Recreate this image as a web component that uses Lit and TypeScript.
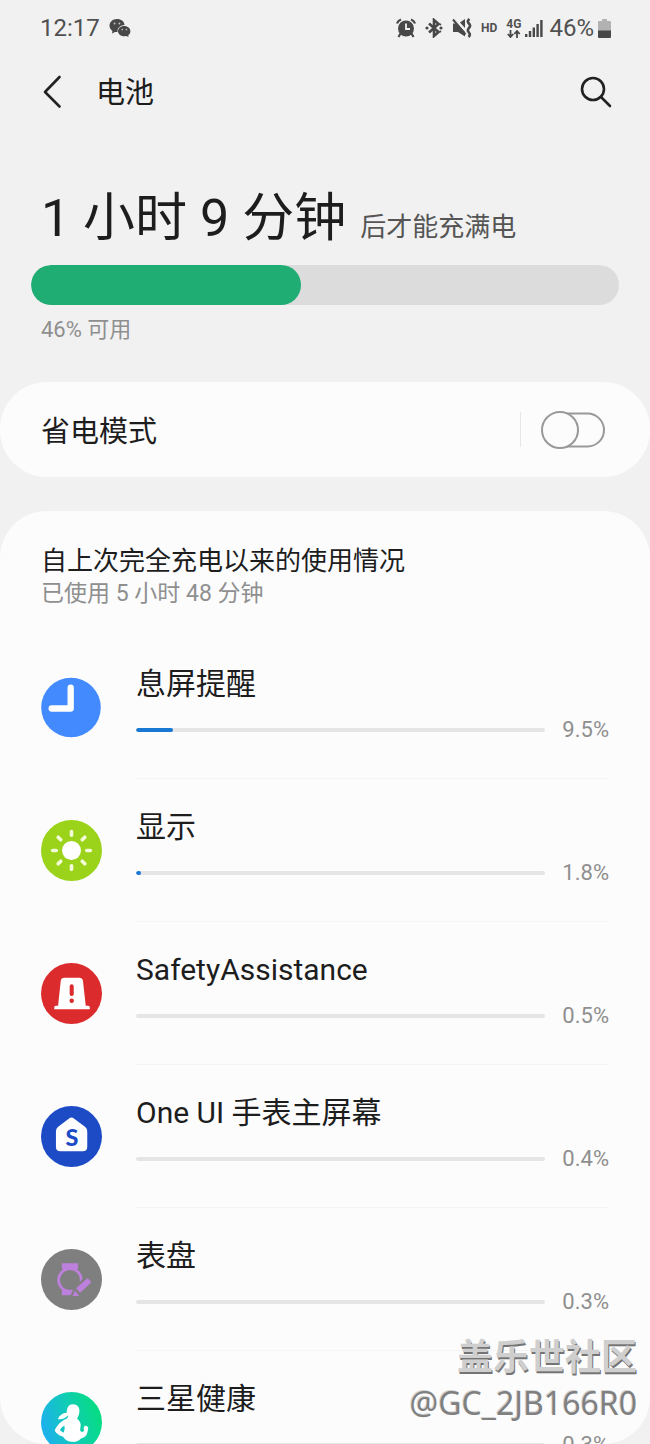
import { LitElement, html, css, svg } from "lit";
import { customElement, property, state } from "lit/decorators.js";

type Usage = { name: string; percent: number; icon: string };

const USAGE: Usage[] = [
  { name: "息屏提醒", percent: 9.5, icon: "clock" },
  { name: "显示", percent: 1.8, icon: "display" },
  { name: "SafetyAssistance", percent: 0.5, icon: "safety" },
  { name: "One UI 手表主屏幕", percent: 0.4, icon: "home" },
  { name: "表盘", percent: 0.3, icon: "watch" },
  { name: "三星健康", percent: 0.3, icon: "health" },
];

const rays = [0, 45, 90, 135, 180, 225, 270, 315];

const ICONS: Record<string, unknown> = {
  clock: svg`
    <circle cx="29.5" cy="30" r="29.3" fill="#448aff"/>
    <path d="M29.2 10.5V31H10.500" fill="none" stroke="#fff" stroke-width="6.2" stroke-linecap="round" stroke-linejoin="round"/>`,
  display: svg`
    <circle cx="30" cy="30" r="30" fill="#9ad31a"/>
    <circle cx="30" cy="30" r="9.3" fill="#fff"/>
    ${rays.map(
      (a) => svg`<path d="M30 15V11.5" transform="rotate(${a} 30 30)" stroke="#f4fbd9" stroke-width="3.6" stroke-linecap="round"/>`
    )}`,
  safety: svg`
    <circle cx="30" cy="30" r="30" fill="#db2b2c"/>
    <path d="M23 14.5h14.6q3.2 0 3.700 3.200L44 42h2.400q1.600 0 1.600 2v1.600H13V44q0-2 1.600-2h2.200l2.600-24.300q.4-3.200 3.600-3.200z" fill="#fff"/>
    <path d="M30.200 23v7.500" stroke="#db2b2c" stroke-width="4" stroke-linecap="round"/>
    <circle cx="30.200" cy="37.200" r="2.200" fill="#db2b2c"/>`,
  home: svg`
    <circle cx="30" cy="30" r="30" fill="#1d4bc6"/>
    <path d="M27.300 12.500q2.700-2.200 5.400 0l10.600 8q2.200 1.700 2.200 4.400V40q0 4.500-4.500 4.500H19.200q-4.500 0-4.500-4.500V24.900q0-2.700 2.200-4.400z" fill="#fff"/>
    <text x="30.500" y="39" text-anchor="middle" font-family="Lato, sans-serif" font-weight="900" font-size="23" fill="#1d4bc6">S</text>`,
  watch: svg`
    <circle cx="30" cy="30" r="30" fill="#7f7f7f"/>
    <circle cx="28.500" cy="30.500" r="11.200" fill="none" stroke="#bd80dd" stroke-width="2.600"/>
    <path d="M20.500 14h16v5l-2.500 2.800q-5.500-2.500-11 0L20.500 19zM20.500 45.500v-6.500q4 3.500 10 3.100L29 45.500z" fill="#bd80dd"/>
    <path d="M31 40L45 25l6 6-14.500 15.500H31z" fill="#7f7f7f"/>
    <path d="M34.500 38.500l10.500-9.300q1-.6 1.800.2l2 2.300q.8 1-.2 1.900L38.500 43zM33.500 41l4 5.200h-6.500z" fill="#bd80dd"/>`,
  health: svg`
    <defs>
      <linearGradient id="g" x1="0" y1="0.6" x2="1" y2="0.3">
        <stop offset="0.05" stop-color="#1cb2ea"/>
        <stop offset="0.55" stop-color="#0fcfae"/>
        <stop offset="0.95" stop-color="#06dc82"/>
      </linearGradient>
    </defs>
    <circle cx="30" cy="30" r="30" fill="url(#g)"/>
    <path d="M31.500 12c4.200 0 6.500 3 6.300 6.800-.1 3.800-1.800 6.400-2.300 7.400 1.500 1.200 3.200 3 3.500 5.500.2 2-.6 4.300-.5 6 .8 2.300 2.800 1.900 4 .5l-.7-2.500 1.200-2.400 2 .2 1.500 1.500-.8 4.500c-.8 3.500-3.200 5.500-6.500 6.200-2 2.700-5.500 3.800-9.500 3.300-3.800-.3-6-2.300-8-5-3.300-1-7-3.300-8.200-6.200 2.200-5 6-9.300 11.200-11.300 1.500-.6 2-1.600 1.800-3.300-3.800 3.600-6.200 4-10 3.600 1.500-4 4.500-6 8.700-6.400.3-5.200 2-8.400 6.300-8.400z" fill="#fff"/>
    <path d="M18.500 37.500q1.500-3 4.500-4.500 1 3.500-.8 7z" fill="#14c5c4"/>`,
};

@customElement("usage-row")
class UsageRow extends LitElement {
  @property({ attribute: false }) item!: Usage;

  static styles = css`
    :host {
      display: flex;
      align-items: center;
      gap: 34px;
    }
    .icon {
      width: 61px;
      height: 61px;
      flex: none;
    }
    .body {
      flex: 1;
      min-width: 0;
      padding: 28px 0 34px;
      border-bottom: 1px solid #f4f4f5;
    }
    .name {
      font-size: 30px;
      line-height: 40px;
      color: #1d1d1d;
    }
    .level {
      display: flex;
      align-items: center;
      gap: 16px;
      margin-top: 12px;
    }
    .track {
      flex: 1;
      height: 4px;
      border-radius: 2px;
      background: #e5e5e5;
      overflow: hidden;
    }
    .fill {
      height: 100%;
      border-radius: 2px;
      background: #1779d4;
    }
    .percent {
      min-width: 48px;
      text-align: right;
      font-size: 22px;
      line-height: 28px;
      color: #8f8f8f;
    }
  `;

  render() {
    const { name, percent, icon } = this.item;
    return html`
      <svg class="icon" viewBox="0 0 60 60" aria-hidden="true">${ICONS[icon]}</svg>
      <div class="body">
        <div class="name" id="name">${name}</div>
        <div class="level">
          <div class="track" role="progressbar" aria-labelledby="name" aria-valuenow=${percent}>
            ${percent >= 1 ? html`<div class="fill" style="width:${percent - 0.5}%"></div>` : ""}
          </div>
          <span class="percent">${percent.toFixed(1)}%</span>
        </div>
      </div>
    `;
  }
}

@customElement("status-bar")
class StatusBar extends LitElement {
  static styles = css`
    :host {
      display: flex;
      align-items: center;
      justify-content: space-between;
      height: 32px;
      padding: 12px 39px 0 40px;
      font-size: 24px;
      line-height: 32px;
      color: #505050;
    }
    .status,
    .group,
    .tight {
      display: flex;
      align-items: center;
    }
    .status {
      gap: 6px;
    }
    .group {
      gap: 9px;
    }
    .tight {
      gap: 4px;
    }
    .tag {
      font-size: 12px;
      line-height: 12px;
      font-weight: 700;
    }
    .network {
      display: flex;
      flex-direction: column;
      align-items: center;
    }
    svg {
      display: block;
      fill: #484848;
    }
  `;

  render() {
    return html`
      <div class="group">
        <span>12:17</span>
        <svg width="22" height="20" viewBox="0 0 22 20">
          <path d="M8 1c4.200 0 7.500 2.600 7.500 6-4 .2-7 2.800-7 6.200l.1.900-2.600-.2L3 15.500l.4-2.600C1.600 11.800.5 9.900.5 7.600.5 3.900 3.800 1 8 1z"/>
          <path d="M15.200 8c3.500 0 6.200 2.300 6.200 5.200 0 1.700-.9 3-2.200 4l.4 1.900-2.400-1.100-2 .2c-3.500 0-6.200-2.200-6.200-5S11.700 8 15.200 8z"/>
          <g fill="#c4c4c4"><circle cx="5.600" cy="5.500" r=".9"/><circle cx="10.400" cy="5.500" r=".9"/><circle cx="13.200" cy="11.600" r=".8"/><circle cx="17.400" cy="11.600" r=".8"/></g>
        </svg>
      </div>
      <div class="status">
        <div class="group">
          <svg width="20" height="20" viewBox="0 0 20 20">
            <circle cx="10" cy="10.500" r="8"/>
            <path d="M1 5.500Q2 2.500 5 1.500M19 5.500Q18 2.500 15 1.500M4.500 15.500L2.500 19M15.500 15.500l2 3.500" fill="none" stroke="#484848" stroke-width="2.200"/>
            <path d="M10 5.500v5.500h4" fill="none" stroke="#f1f1f1" stroke-width="1.800"/>
          </svg>
          <svg width="18" height="20" viewBox="0 0 18 20">
            <path d="M4 5.500l9.500 8.500L9 18V2l4.500 4L4 14.500" fill="none" stroke="#484848" stroke-width="2.600"/>
            <circle cx="2" cy="10" r="1.600"/><circle cx="16" cy="10" r="1.600"/>
            <circle cx="15.300" cy="6.500" r="1"/><circle cx="15.300" cy="13.500" r="1"/>
          </svg>
          <svg width="20" height="20" viewBox="0 0 20 20">
            <path d="M1 5.500h4l8 8.500v4.500L6 14H1zM8 4.500L13 1v9z"/>
            <path d="M1 1.500l12.500 15" stroke="#484848" stroke-width="2"/>
            <path d="M17.500 1q-3 2.200-.6 4.500t0 4.500q-2 2.200 0 4.500t-.4 4.500" fill="none" stroke="#484848" stroke-width="2.600"/>
          </svg>
          <span class="tag">HD</span>
          <div class="tight">
            <div class="network">
              <span class="tag">4G</span>
              <svg width="14" height="8" viewBox="0 0 14 8">
                <path d="M3.500 0v6M.8 4l2.700 3 2.700-3M10 8V2M7.300 4L10 1l2.700 3" fill="none" stroke="#484848" stroke-width="1.800"/>
              </svg>
            </div>
            <svg width="18" height="18" viewBox="0 0 18 18">
              <path d="M0 15h2.400v3H0zM3.800 12h2.400v6H3.800zM7.600 8.500H10V18H7.600zM11.400 5h2.400v13h-2.400zM15.200 1h2.400v17h-2.400z"/>
            </svg>
          </div>
        </div>
        <div class="tight">
          <span>46%</span>
          <svg width="13" height="19" viewBox="0 0 13 19">
            <path d="M4 0h5v2h3q1 0 1 1v9H0V3q0-1 1-1h3z" fill="#b2b2b2"/>
            <path d="M0 11.500h13V18q0 1-1 1H1q-1 0-1-1z"/>
          </svg>
        </div>
      </div>
    `;
  }
}

@customElement("app-root")
class AppRoot extends LitElement {
  @state() private saving = false;

  static styles = css`
    :host {
      display: flex;
      flex-direction: column;
      position: relative;
      height: 100vh;
      overflow: hidden;
      background: #f1f1f1;
      color: #1d1d1d;
      font-family: Roboto, "Noto Sans CJK SC", sans-serif;
    }
    .appbar {
      display: flex;
      align-items: center;
      height: 48px;
      margin-top: 24px;
      padding: 0 32px 0 30px;
    }
    .appbar button {
      display: grid;
      place-items: center;
      width: 44px;
      height: 48px;
      padding: 0;
      border: 0;
      background: none;
    }
    .appbar svg,
    .switch svg {
      fill: none;
      stroke: #222;
      stroke-width: 2.6;
      stroke-linecap: round;
      stroke-linejoin: round;
    }
    h1 {
      flex: 1;
      margin: 0 0 0 22px;
      padding-top: 2px;
      font-size: 29px;
      line-height: 40px;
      font-weight: 400;
    }
    .charge {
      padding: 0 31px;
      margin-top: 67px;
    }
    .remaining {
      display: flex;
      align-items: baseline;
      flex-wrap: wrap;
      gap: 14px;
      padding-left: 10px;
    }
    .time {
      font-size: 52px;
      line-height: 72px;
    }
    .until {
      font-size: 26px;
      color: #555;
    }
    .battery {
      height: 40px;
      margin-top: 10px;
      border-radius: 20px;
      background: #dcdcdc;
      overflow: hidden;
    }
    .battery-fill {
      height: 100%;
      border-radius: 20px;
      background: #1fad74;
    }
    .available {
      margin: 10px 0 0;
      padding-left: 10px;
      font-size: 22px;
      line-height: 30px;
      color: #8f8f8f;
    }
    .card {
      flex: none;
      border-radius: 47px;
      background: #fcfcfd;
      padding: 0 41px;
    }
    .saver {
      display: flex;
      align-items: center;
      height: 95px;
      margin-top: 37px;
      font-size: 29px;
    }
    .saver label {
      flex: 1;
      padding-bottom: 2px;
    }
    .divider {
      width: 1px;
      height: 35px;
      margin-right: 20px;
      background: #e6e6e6;
    }
    .switch {
      position: relative;
      width: 68px;
      height: 38px;
    }
    .switch input {
      position: absolute;
      inset: 0;
      width: 100%;
      height: 100%;
      margin: 0;
      opacity: 0;
    }
    .switch svg {
      display: block;
      stroke: #999;
      stroke-width: 2;
    }
    .switch .knob {
      fill: #fcfcfd;
    }
    .usage {
      flex: 1 1 0;
      min-height: 0;
      overflow: hidden;
      margin-top: 34px;
    }
    h2 {
      margin: 34px 0 0;
      font-size: 26px;
      line-height: 32px;
      font-weight: 400;
    }
    .used {
      margin: 2px 0 27px;
      font-size: 23px;
      line-height: 30px;
      color: #8f8f8f;
    }
    .watermark {
      position: absolute;
      right: 13px;
      bottom: 20px;
      text-align: right;
      pointer-events: none;
    }
    .forum {
      font-size: 36px;
      line-height: 48px;
      font-weight: 700;
      color: #cfcfcf;
      text-shadow: 1px 2px 0 #747474;
    }
    .author {
      font-family: "Noto Sans", sans-serif;
      font-size: 32px;
      line-height: 42px;
      color: #808080;
      text-shadow: -1px -1px 0 #d4d4d4;
    }
  `;

  render() {
    return html`
      <status-bar></status-bar>
      <header class="appbar">
        <button aria-label="返回">
          <svg width="20" height="34" viewBox="0 0 20 34"><path d="M17.500 2L3 17l14.500 14.500"/></svg>
        </button>
        <h1>电池</h1>
        <button aria-label="搜索">
          <svg width="32" height="32" viewBox="0 0 32 32"><circle cx="13" cy="13" r="11"/><path d="M21 21l9 9"/></svg>
        </button>
      </header>

      <section class="charge">
        <div class="remaining">
          <span class="time">1 小时 9 分钟</span>
          <span class="until">后才能充满电</span>
        </div>
        <div class="battery" role="progressbar" aria-label="电池" aria-valuenow="46">
          <div class="battery-fill" style="width:46%"></div>
        </div>
        <p class="available">46% 可用</p>
      </section>

      <section class="card saver">
        <label for="saver">省电模式</label>
        <span class="divider"></span>
        <div class="switch">
          <input
            id="saver"
            type="checkbox"
            role="switch"
            .checked=${this.saving}
            @change=${(e: Event) => (this.saving = (e.target as HTMLInputElement).checked)}
          />
          <svg width="64" height="38" viewBox="0 0 64 38">
            <rect x="6" y="2.500" width="57" height="33" rx="16.500"/>
            <circle class="knob" cx=${this.saving ? 45 : 19} cy="19" r="18"/>
          </svg>
        </div>
      </section>

      <section class="card usage">
        <h2>自上次完全充电以来的使用情况</h2>
        <p class="used">已使用 5 小时 48 分钟</p>
        ${USAGE.map((item) => html`<usage-row .item=${item}></usage-row>`)}
      </section>

      <div class="watermark">
        <div class="forum">盖乐世社区</div>
        <div class="author">@GC_2JB166R0</div>
      </div>
    `;
  }
}
